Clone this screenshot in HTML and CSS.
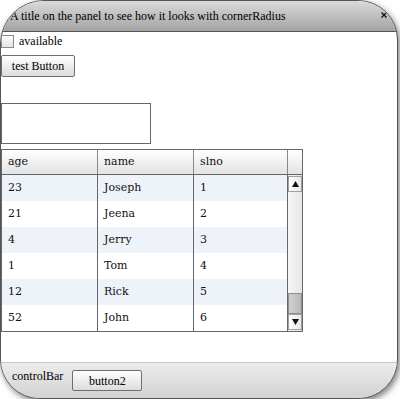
FILE: index.html
```html
<!DOCTYPE html>
<html>
<head>
<meta charset="utf-8">
<link rel="stylesheet" href="styles.css">
</head>
<body>
<div class="panel">
  <div class="titlebar">
    <span class="title">A title on the panel to see how it looks with cornerRadius</span>
    <svg class="close" width="6" height="6" viewBox="0 0 6 6"><path d="M0.5 0.5L5.5 5.5M5.5 0.5L0.5 5.5" stroke="#111" stroke-width="1.4"/></svg>
  </div>
  <div class="content">
    <label class="check"><span class="box"></span><span class="lbl">available</span></label>
    <button class="btn test">test Button</button>
    <div class="input"></div>
    <div class="grid">
      <div class="ghead">
        <div class="hc c1">age</div><div class="hc c2">name</div><div class="hc c3">slno</div><div class="hc sc"></div>
      </div>
      <div class="gbody">
        <div class="rows">
          <div class="row odd"><div class="cell c1">23</div><div class="cell c2">Joseph</div><div class="cell c3">1</div></div>
          <div class="row"><div class="cell c1">21</div><div class="cell c2">Jeena</div><div class="cell c3">2</div></div>
          <div class="row odd"><div class="cell c1">4</div><div class="cell c2">Jerry</div><div class="cell c3">3</div></div>
          <div class="row"><div class="cell c1">1</div><div class="cell c2">Tom</div><div class="cell c3">4</div></div>
          <div class="row odd"><div class="cell c1">12</div><div class="cell c2">Rick</div><div class="cell c3">5</div></div>
          <div class="row"><div class="cell c1">52</div><div class="cell c2">John</div><div class="cell c3">6</div></div>
        </div>
        <div class="vscroll">
          <div class="arrow up"><svg width="7" height="6" viewBox="0 0 7 6"><path d="M3.5 0L7 6H0Z" fill="#111"/></svg></div>
          <div class="track"></div>
          <div class="thumb"></div>
          <div class="arrow down"><svg width="7" height="6" viewBox="0 0 7 6"><path d="M0 0H7L3.5 6Z" fill="#111"/></svg></div>
        </div>
      </div>
    </div>
  </div>
  <div class="controlbar">
    <span class="cbtext">controlBar</span>
    <button class="btn b2">button2</button>
  </div>
</div>
</body>
</html>
```
FILE: styles.css
```css
html, body {
  margin: 0;
  padding: 0;
  background: #fff;
}
body {
  font-family: "Liberation Serif", serif;
  color: #000;
}
.panel {
  box-sizing: border-box;
  width: 398px;
  height: 399px;
  border: 1px solid #555;
  border-radius: 44px 40px 40px 40px;
  overflow: hidden;
  display: flex;
  flex-direction: column;
  background: #fff;
  box-shadow: 2px 3px 6px rgba(0,0,0,0.5);
}
.titlebar {
  height: 30px;
  flex: none;
  border-bottom: 1px solid #555;
  background: linear-gradient(#dadada, #a3a3a3);
  display: flex;
  align-items: center;
  padding-left: 9px;
  padding-right: 10px;
  font-size: 12px;
}
.title {
  flex: 1;
  white-space: nowrap;
}
.close {
  display: block;
  margin-top: -2px;
}
.content {
  flex: 1;
  display: flex;
  flex-direction: column;
  align-items: flex-start;
  padding-top: 2px;
}
.check {
  display: flex;
  align-items: center;
  font-size: 12px;
  height: 14px;
}
.box {
  box-sizing: border-box;
  width: 13px;
  height: 13px;
  border: 1px solid #8a8a8a;
  background: linear-gradient(#fdfdfd, #e4e4e4);
  margin-right: 5px;
}
.lbl {
  line-height: 14px;
}
.btn {
  box-sizing: border-box;
  font-family: "Liberation Serif", serif;
  font-size: 12px;
  color: #000;
  border: 1px solid #6f6f6f;
  border-radius: 2px;
  background: linear-gradient(#ffffff, #dcdcdc);
  padding: 0;
  margin: 0;
  line-height: 18px;
}
.test {
  width: 74px;
  height: 22px;
  margin-top: 7px;
}
.input {
  box-sizing: border-box;
  width: 150px;
  height: 41px;
  border: 1px solid #666;
  background: #fff;
  margin-top: 26px;
}
.grid {
  box-sizing: border-box;
  width: 302px;
  border: 1px solid #666;
  margin-top: 5px;
  font-family: "DejaVu Serif", serif;
  font-size: 11px;
  color: #111;
}
.ghead {
  display: flex;
  height: 24px;
  border-bottom: 1px solid #666;
  background: linear-gradient(#ffffff, #e3e3e3);
}
.hc {
  box-sizing: border-box;
  border-right: 1px solid #888;
  padding-left: 6px;
  line-height: 24px;
}
.c1 { width: 96px; }
.c2 { width: 96px; }
.c3 { width: 94px; }
.sc { width: 14px; border-right: none; }
.gbody {
  display: flex;
}
.rows {
  width: 286px;
}
.row {
  display: flex;
  height: 26px;
  background: #fff;
}
.row.odd {
  background: #eef3fa;
}
.cell {
  box-sizing: border-box;
  border-right: 1px solid #666;
  padding-left: 6px;
  line-height: 26px;
}
.vscroll {
  width: 14px;
  height: 156px;
  display: flex;
  flex-direction: column;
  background: linear-gradient(90deg, #f7f7f7, #e6e6e6);
}
.arrow {
  box-sizing: border-box;
  height: 16px;
  margin-top: 1px;
  display: flex;
  align-items: center;
  justify-content: center;
  border: 1px solid #a0a0a0;
  background: linear-gradient(90deg, #ffffff, #e8e8e8);
}
.arrow.down {
  margin-top: 0;
  margin-bottom: 1px;
}
.track {
  flex: 1;
}
.thumb {
  box-sizing: border-box;
  height: 21px;
  border: 1px solid #8e8e8e;
  background: linear-gradient(90deg, #d0d0d0, #b8b8b8);
}
.controlbar {
  box-sizing: border-box;
  height: 36px;
  flex: none;
  border-top: 1px solid #c6c6c6;
  background: linear-gradient(#ececec, #d2d2d2);
  display: flex;
  align-items: flex-start;
  padding-left: 11px;
}
.cbtext {
  font-size: 12px;
  line-height: 14px;
  margin-top: 6px;
}
.b2 {
  width: 70px;
  height: 21px;
  margin-top: 7px;
  margin-left: 9px;
}
```
